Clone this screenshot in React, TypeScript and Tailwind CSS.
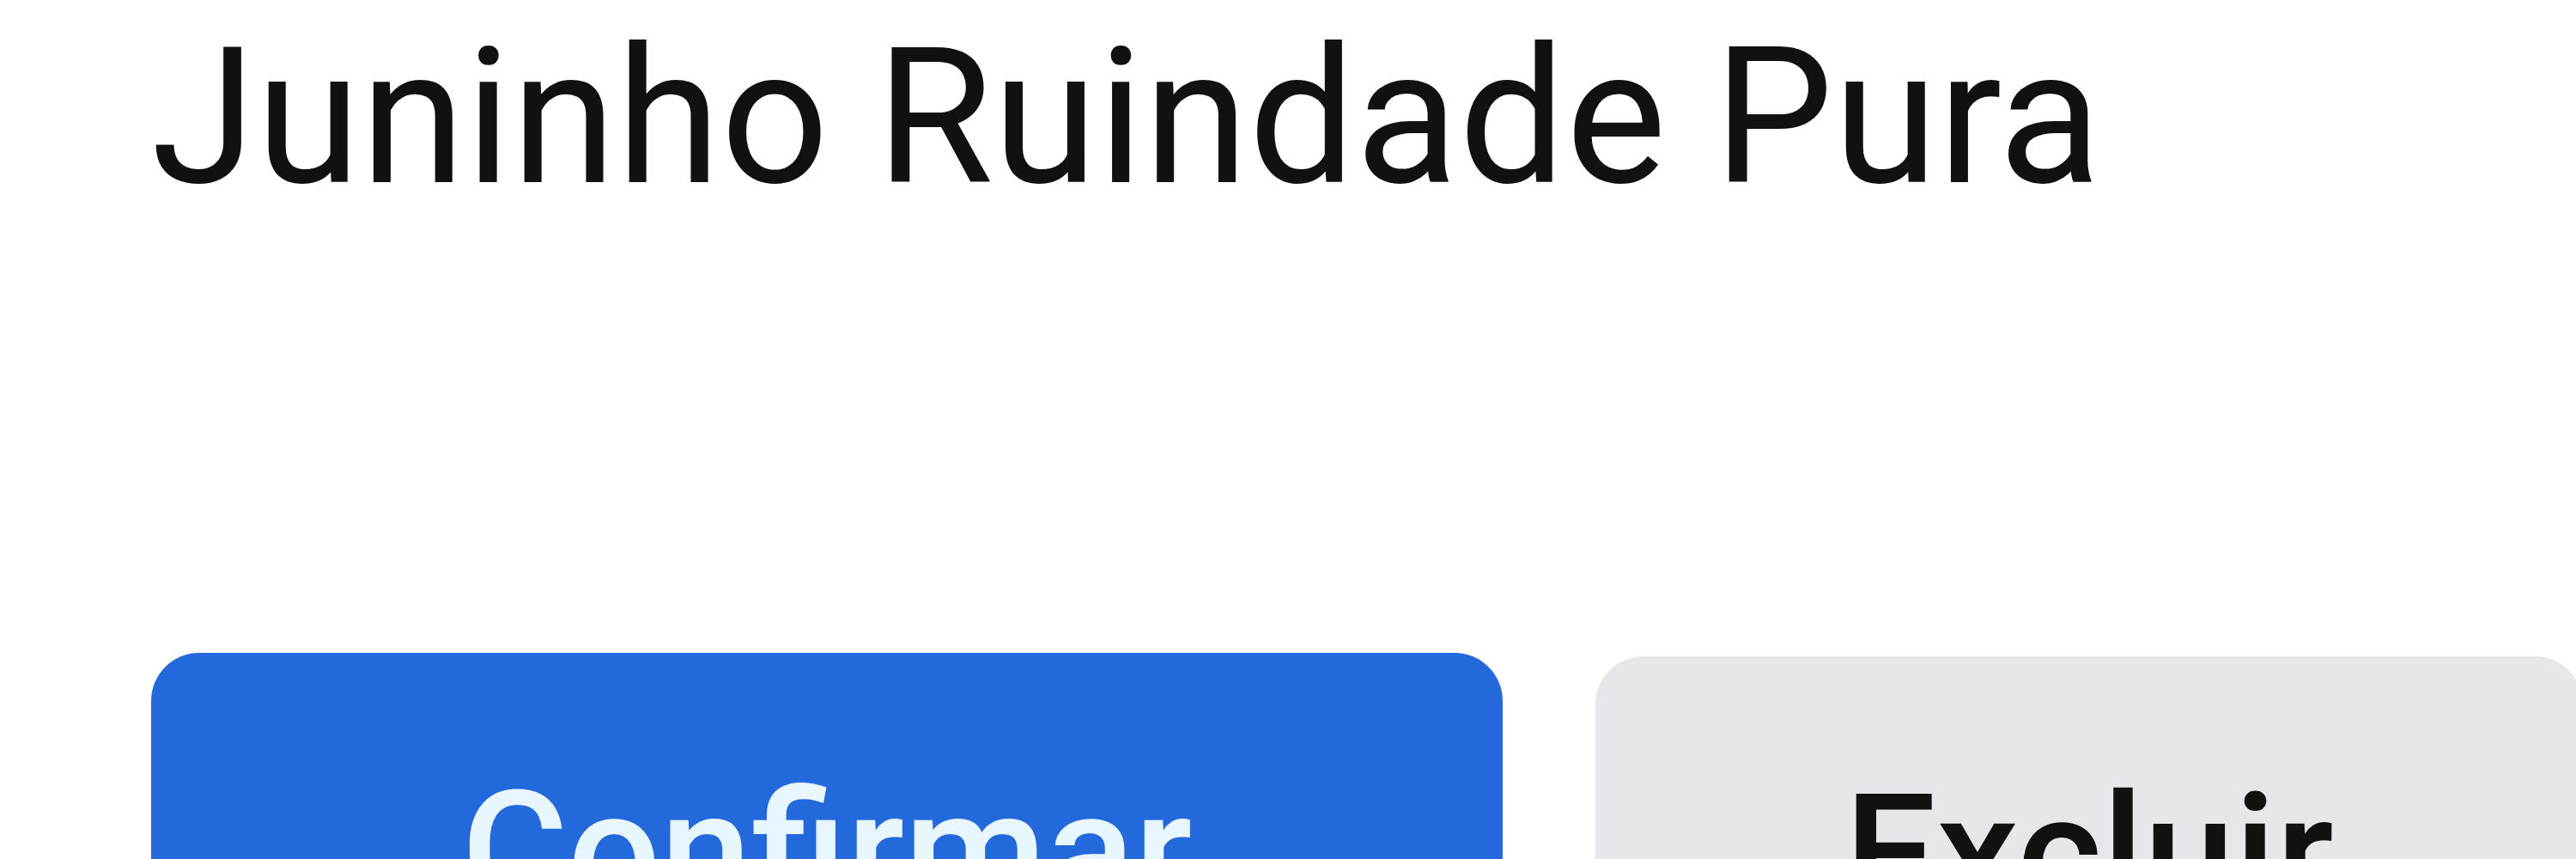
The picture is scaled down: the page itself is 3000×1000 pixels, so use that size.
export default function App() {
  return (
    <div className="w-[3000px] h-[1000px] overflow-hidden bg-white flex flex-col pl-[176px] pt-[26px] font-['Roboto','Liberation_Sans',sans-serif]">
      <h1 className="shrink-0 text-[221px] leading-none font-normal text-[#111111] whitespace-nowrap">
        Juninho Ruindade Pura
      </h1>

      <div className="shrink-0 mt-[513px] flex items-start gap-[108px]">
        <button className="w-[1574px] h-[462px] shrink-0 rounded-[56px] bg-[#2369dc] text-[#e8f6ff] text-[190px] leading-none font-medium flex items-start justify-center pt-[135px]">
          Confirmar
        </button>
        <button className="mt-[4px] w-[1150px] h-[462px] shrink-0 rounded-[56px] bg-[#e6e6eb] text-[#111111] text-[190px] leading-none font-medium flex items-start justify-center pt-[135px]">
          Excluir
        </button>
      </div>
    </div>
  );
}
